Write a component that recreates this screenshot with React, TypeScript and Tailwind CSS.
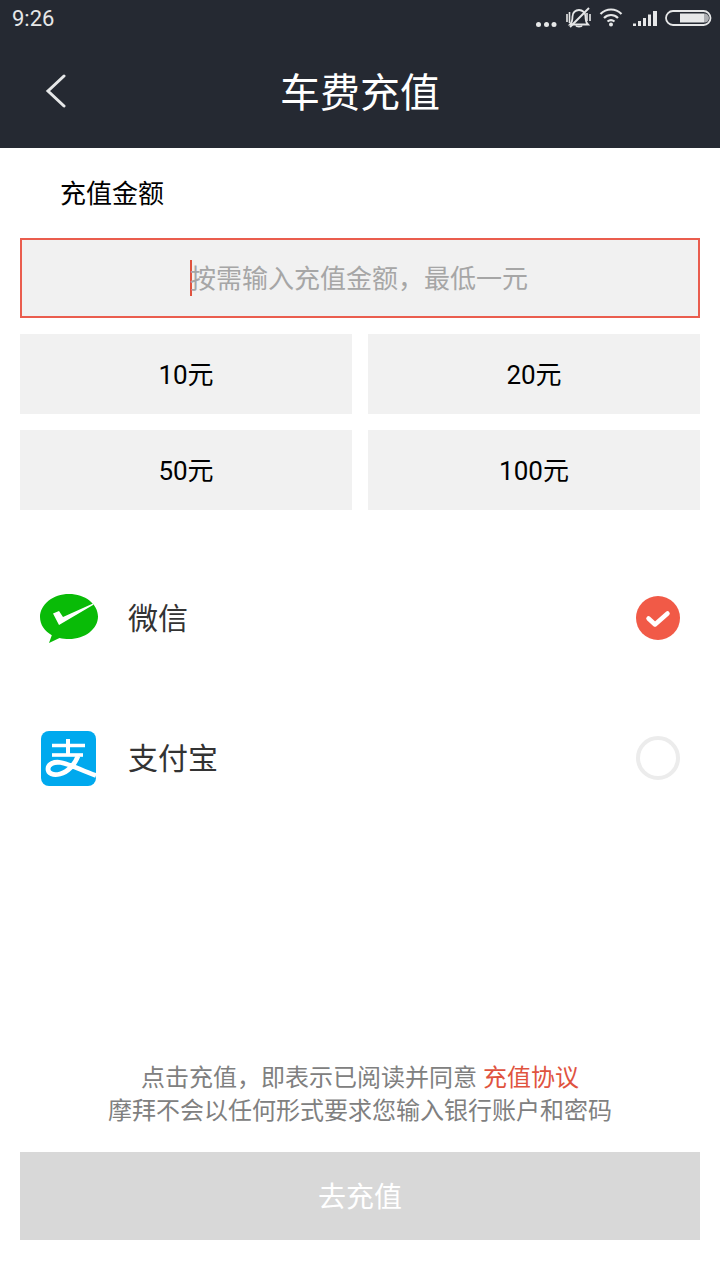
const FONT = "font-['Roboto','Noto_Sans_CJK_SC',sans-serif]";

const amounts = ['10元', '20元', '50元', '100元'];

function StatusIcons() {
  return (
    <svg width="177" height="36" viewBox="0 0 177 36" className="text-[#e6e7e8]">
      {/* dots */}
      <circle cx="3.500" cy="24.500" r="2.500" fill="currentColor" />
      <circle cx="11.500" cy="24.500" r="2.500" fill="currentColor" />
      <circle cx="19" cy="24.500" r="2.500" fill="currentColor" />
      {/* muted bell */}
      <g fill="none" stroke="currentColor" strokeWidth="1.800">
        <path d="M35 24.500c2-2 2.500-4 2.500-8 0-4 3-6.500 6.500-6.500s6.500 2.500 6.500 6.500c0 4 .5 6 2.500 8z" />
        <path d="M41 25.500c.5 1.500 5.500 1.500 6 0" />
        <path d="M35 27L54 8" strokeWidth="2" />
        <path d="M32 14v8M34.500 12v11M52 13v8M55 14v7" strokeWidth="1.600" />
      </g>
      {/* wifi */}
      <g fill="none" stroke="currentColor" strokeWidth="2.200">
        <path d="M65.500 14c6-6 15-6 21 0" />
        <path d="M69 18c4-4 10-4 14 0" />
        <path d="M72.500 21.500c2-1.600 5-1.600 7 0" />
      </g>
      <circle cx="76" cy="24.500" r="2" fill="currentColor" />
      {/* signal */}
      <path d="M98 23.500h3v2.500h-3zM103 21h3v5h-3zM108 18h3v8h-3zM113 14.500h3v11.500h-3zM118 11h4v15h-4z" fill="currentColor" />
      {/* battery */}
      <rect x="131" y="11" width="44.500" height="14" rx="7" fill="none" stroke="currentColor" strokeWidth="1.800" />
      <rect x="145" y="13.500" width="24" height="9" fill="currentColor" />
      <path d="M169 13.500h.5a4.500 4.500 0 0 1 0 9h-.5z" fill="currentColor" opacity="0.700" />
    </svg>
  );
}

function WechatIcon() {
  return (
    <svg width="60" height="51" viewBox="0 0 60 51" className="-ml-[1px]">
      <path
        d="M30 1C14 1 1 11.500 1 24c0 7.800 4.800 14.300 11.800 18.200L10 50l10.500-5.100c3 .8 6.200 1.100 9.500 1.100 16 0 29-10 29-22.500S46 1 30 1z"
        fill="#09bb07"
      />
      <path d="M14 20.500l6-2.500 4 6 30-13.500v1.500L20 32z" fill="#fff" />
    </svg>
  );
}

function AlipayIcon() {
  return (
    <svg width="55" height="55" viewBox="0 0 55 55" className="ml-[1px]">
      <rect width="55" height="55" rx="8" fill="#00a9ee" />
      <g fill="none" stroke="#fff">
        <path d="M11 14.500h33" strokeWidth="3.600" />
        <path d="M27 8v16" strokeWidth="4" />
        <path d="M11 24h31" strokeWidth="3.600" />
        <path d="M37 25c-3 8-10 16-18 18-7 1.700-12-.5-12-5 0-5 6-7.500 12.500-6.500 9 1.300 21 8 35.500 13" strokeWidth="4.800" />
      </g>
    </svg>
  );
}

function PayRow({ name, icon, selected }: { name: string; icon: React.ReactNode; selected?: boolean }) {
  return (
    <div className="flex h-[140px] items-center pl-[40px] pr-[40px]">
      <div className="flex w-[88px] items-center">{icon}</div>
      <span className="flex-1 pt-[2px] text-[30px] leading-none text-[#333]">{name}</span>
      {selected ? (
        <svg width="44" height="44" viewBox="0 0 44 44">
          <circle cx="22" cy="22" r="22" fill="#f15a47" />
          <path d="M12.500 22.500l6.500 6 12.500-11" fill="none" stroke="#fff" strokeWidth="4.500" strokeLinecap="round" strokeLinejoin="round" />
        </svg>
      ) : (
        <div className="h-[44px] w-[44px] rounded-full border-[4px] border-[#ececec]" />
      )}
    </div>
  );
}

export default function App() {
  return (
    <div className={`flex h-[1280px] w-[720px] flex-col bg-white ${FONT}`}>
      <header className="h-[148px] bg-[#252932]">
        <div className="flex h-[36px] items-center justify-between pl-[12px] pr-[8px] text-[#e6e7e8]">
          <span className="pt-[2px] text-[22px] leading-none">9:26</span>
          <StatusIcons />
        </div>
        <div className="relative flex h-[112px] items-center justify-center pt-[4px]">
          <svg className="absolute left-[44px] top-[38px]" width="24" height="34" viewBox="0 0 24 34">
            <path d="M20 2L4 17l16 15" fill="none" stroke="#e6e7e8" strokeWidth="3" strokeLinecap="round" strokeLinejoin="miter" />
          </svg>
          <h1 className="text-[40px] leading-none text-white">车费充值</h1>
        </div>
      </header>

      <div className="flex h-[90px] items-center pl-[60px] pt-[2px] text-[26px] leading-none text-black">充值金额</div>

      <div className="mx-[20px] flex h-[80px] items-center justify-center border-2 border-[#ea5d4e] bg-[#f1f1f1] pr-[2px] pt-[2px] text-[26px] text-[#a6a6a6]">
        <span className="-mr-[2px] -mt-[2px] h-[36px] w-[2px] bg-[#e0533f]" />
        按需输入充值金额，最低一元
      </div>

      <div className="mx-[20px] mt-[16px] grid grid-cols-2 gap-[16px]">
        {amounts.map((a) => (
          <div key={a} className="flex h-[80px] items-center justify-center bg-[#f1f1f1] pt-[2px] text-[26px] text-black">
            {a}
          </div>
        ))}
      </div>

      <div className="mt-[38px]">
        <PayRow name="微信" icon={<WechatIcon />} selected />
        <PayRow name="支付宝" icon={<AlipayIcon />} />
      </div>

      <div className="mt-auto pt-[2px] text-center text-[24px] leading-[33px] text-[#808080]">
        <p>
          点击充值，即表示已阅读并同意 <span className="text-[#e0533f]">充值协议</span>
        </p>
        <p>摩拜不会以任何形式要求您输入银行账户和密码</p>
      </div>

      <div className="mx-[20px] mb-[40px] mt-[24px] flex h-[88px] items-center justify-center bg-[#d8d8d8] pt-[4px] text-[28px] text-white">
        去充值
      </div>
    </div>
  );
}
